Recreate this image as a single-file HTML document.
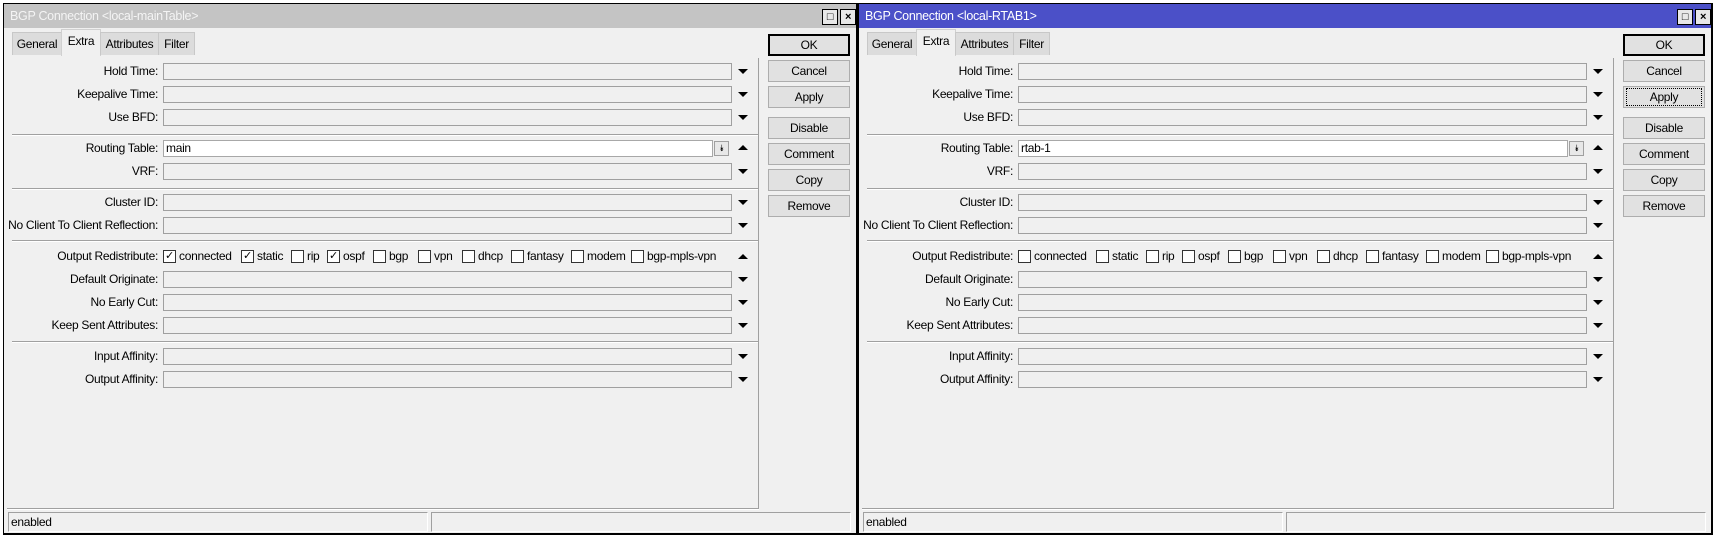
<!DOCTYPE html>
<html><head><meta charset="utf-8"><style>
*{box-sizing:border-box;margin:0;padding:0}
body{width:1716px;height:541px;background:#fff;position:relative;overflow:hidden;font-family:"Liberation Sans",sans-serif;font-size:12px;color:#000;letter-spacing:-0.3px}
.win{position:absolute;top:3px;width:855px;height:532px;border:1px solid #000;border-width:1px 2px 2px 1px;background:#f0f0f0}
.tb{position:absolute;left:0;top:0;right:0;height:24px;background:#c4c4c4;color:#f4f4f4;font-size:12.5px;line-height:24px;padding-left:6px}
.w2 .tb{background:#4b50c8;color:#fff}
.wb{position:absolute;top:5px;width:16px;height:16px;border:1px solid #000;background:#e8e8e8;font-size:11px;line-height:14px;text-align:center;font-weight:bold}
.tab{position:absolute;top:28px;height:23px;background:#dcdcdc;border:1px solid #c8c8c8;border-bottom:none;line-height:22px;text-align:center;font-size:12px}
.tab.sel{top:25px;height:27px;background:#f0f0f0;border-color:#d0d0d0;line-height:22px}
.lb{position:absolute;left:0;width:154px;text-align:right;height:17px;line-height:17px}
.f{position:absolute;left:159px;width:569px;height:17px;border:1px solid #a0a0a0;background:#f0f0f0;line-height:15px;padding-left:2px}
.f.w{background:#fff;width:550px;border-color:#a8a8a8}
.dn,.up{position:absolute;left:734px;width:0;height:0;border-left:5px solid transparent;border-right:5px solid transparent}
.dn{border-top:5px solid #000}
.up{border-bottom:5px solid #000}
.sep{position:absolute;left:8px;width:746px;height:2px;border-top:1px solid #a0a0a0;border-bottom:1px solid #fff}
.btn{position:absolute;left:764px;width:82px;height:22px;border:1px solid #adadad;background:#e1e1e1;text-align:center;line-height:20px}
.btn.ok{border:2px solid #000;line-height:18px}
.btn.foc span{outline:1px dotted #000;outline-offset:1px;padding:0 22px}
.cb{position:absolute;top:246px;width:13px;height:13px;border:1px solid #333;background:#fff;font-size:11px;line-height:11px;text-align:center}
.cl{position:absolute;top:246px;line-height:13px}
.dd{position:absolute;left:710px;width:15px;height:15px;border:1px solid #a0a0a0;background:#e8e8e8;font-size:9px;text-align:center;line-height:13px}
.pr{position:absolute;left:754px;top:54px;width:1px;height:451px;background:#a0a0a0}
.pb{position:absolute;left:3px;top:504px;width:752px;height:2px;background:#a0a0a0;border-bottom:1px solid #fff}
.st{position:absolute;top:508px;height:20px;border:1px solid #a0a0a0;border-right-color:#fff;border-bottom-color:#fff;line-height:18px;padding-left:2px}
</style></head><body>

<!-- Window 1 -->
<div class="win" style="left:3px">
 <div class="tb">BGP Connection &lt;local-mainTable&gt;</div>
 <div class="wb" style="left:818px">□</div><div class="wb" style="left:836px">×</div>
 <div class="tab" style="left:8px;width:50px">General</div>
 <div class="tab sel" style="left:57px;width:40px">Extra</div>
 <div class="tab" style="left:96px;width:59px">Attributes</div>
 <div class="tab" style="left:154px;width:37px">Filter</div>
 <div class="pr"></div><div class="pb"></div>

 <div class="lb" style="top:59px">Hold Time:</div><div class="f" style="top:59px"></div><div class="dn" style="top:65px"></div>
 <div class="lb" style="top:82px">Keepalive Time:</div><div class="f" style="top:82px"></div><div class="dn" style="top:88px"></div>
 <div class="lb" style="top:105px">Use BFD:</div><div class="f" style="top:105px"></div><div class="dn" style="top:111px"></div>
 <div class="sep" style="top:130px"></div>
 <div class="lb" style="top:136px">Routing Table:</div><div class="f w" style="top:136px">main</div><div class="dd" style="top:137px">⯯</div><div class="up" style="top:141px"></div>
 <div class="lb" style="top:159px">VRF:</div><div class="f" style="top:159px"></div><div class="dn" style="top:165px"></div>
 <div class="sep" style="top:184px"></div>
 <div class="lb" style="top:190px">Cluster ID:</div><div class="f" style="top:190px"></div><div class="dn" style="top:196px"></div>
 <div class="lb" style="top:213px">No Client To Client Reflection:</div><div class="f" style="top:213px"></div><div class="dn" style="top:219px"></div>
 <div class="sep" style="top:236px"></div>
 <div class="lb" style="top:244px">Output Redistribute:</div>
 <div class="cb" style="left:159px">✓</div><div class="cl" style="left:175px">connected</div>
 <div class="cb" style="left:237px">✓</div><div class="cl" style="left:253px">static</div>
 <div class="cb" style="left:287px"></div><div class="cl" style="left:303px">rip</div>
 <div class="cb" style="left:323px">✓</div><div class="cl" style="left:339px">ospf</div>
 <div class="cb" style="left:369px"></div><div class="cl" style="left:385px">bgp</div>
 <div class="cb" style="left:414px"></div><div class="cl" style="left:430px">vpn</div>
 <div class="cb" style="left:458px"></div><div class="cl" style="left:474px">dhcp</div>
 <div class="cb" style="left:507px"></div><div class="cl" style="left:523px">fantasy</div>
 <div class="cb" style="left:567px"></div><div class="cl" style="left:583px">modem</div>
 <div class="cb" style="left:627px"></div><div class="cl" style="left:643px">bgp-mpls-vpn</div>
 <div class="up" style="top:250px"></div>
 <div class="lb" style="top:267px">Default Originate:</div><div class="f" style="top:267px"></div><div class="dn" style="top:273px"></div>
 <div class="lb" style="top:290px">No Early Cut:</div><div class="f" style="top:290px"></div><div class="dn" style="top:296px"></div>
 <div class="lb" style="top:313px">Keep Sent Attributes:</div><div class="f" style="top:313px"></div><div class="dn" style="top:319px"></div>
 <div class="sep" style="top:337px"></div>
 <div class="lb" style="top:344px">Input Affinity:</div><div class="f" style="top:344px"></div><div class="dn" style="top:350px"></div>
 <div class="lb" style="top:367px">Output Affinity:</div><div class="f" style="top:367px"></div><div class="dn" style="top:373px"></div>

 <div class="btn ok" style="top:30px">OK</div>
 <div class="btn" style="top:56px">Cancel</div>
 <div class="btn" style="top:82px">Apply</div>
 <div class="btn" style="top:113px">Disable</div>
 <div class="btn" style="top:139px">Comment</div>
 <div class="btn" style="top:165px">Copy</div>
 <div class="btn" style="top:191px">Remove</div>

 <div class="st" style="left:4px;width:420px">enabled</div>
 <div class="st" style="left:427px;width:420px"></div>
</div>

<!-- Window 2 -->
<div class="win w2" style="left:858px">
 <div class="tb">BGP Connection &lt;local-RTAB1&gt;</div>
 <div class="wb" style="left:818px">□</div><div class="wb" style="left:836px">×</div>
 <div class="tab" style="left:8px;width:50px">General</div>
 <div class="tab sel" style="left:57px;width:40px">Extra</div>
 <div class="tab" style="left:96px;width:59px">Attributes</div>
 <div class="tab" style="left:154px;width:37px">Filter</div>
 <div class="pr"></div><div class="pb"></div>

 <div class="lb" style="top:59px">Hold Time:</div><div class="f" style="top:59px"></div><div class="dn" style="top:65px"></div>
 <div class="lb" style="top:82px">Keepalive Time:</div><div class="f" style="top:82px"></div><div class="dn" style="top:88px"></div>
 <div class="lb" style="top:105px">Use BFD:</div><div class="f" style="top:105px"></div><div class="dn" style="top:111px"></div>
 <div class="sep" style="top:130px"></div>
 <div class="lb" style="top:136px">Routing Table:</div><div class="f w" style="top:136px">rtab-1</div><div class="dd" style="top:137px">⯯</div><div class="up" style="top:141px"></div>
 <div class="lb" style="top:159px">VRF:</div><div class="f" style="top:159px"></div><div class="dn" style="top:165px"></div>
 <div class="sep" style="top:184px"></div>
 <div class="lb" style="top:190px">Cluster ID:</div><div class="f" style="top:190px"></div><div class="dn" style="top:196px"></div>
 <div class="lb" style="top:213px">No Client To Client Reflection:</div><div class="f" style="top:213px"></div><div class="dn" style="top:219px"></div>
 <div class="sep" style="top:236px"></div>
 <div class="lb" style="top:244px">Output Redistribute:</div>
 <div class="cb" style="left:159px"></div><div class="cl" style="left:175px">connected</div>
 <div class="cb" style="left:237px"></div><div class="cl" style="left:253px">static</div>
 <div class="cb" style="left:287px"></div><div class="cl" style="left:303px">rip</div>
 <div class="cb" style="left:323px"></div><div class="cl" style="left:339px">ospf</div>
 <div class="cb" style="left:369px"></div><div class="cl" style="left:385px">bgp</div>
 <div class="cb" style="left:414px"></div><div class="cl" style="left:430px">vpn</div>
 <div class="cb" style="left:458px"></div><div class="cl" style="left:474px">dhcp</div>
 <div class="cb" style="left:507px"></div><div class="cl" style="left:523px">fantasy</div>
 <div class="cb" style="left:567px"></div><div class="cl" style="left:583px">modem</div>
 <div class="cb" style="left:627px"></div><div class="cl" style="left:643px">bgp-mpls-vpn</div>
 <div class="up" style="top:250px"></div>
 <div class="lb" style="top:267px">Default Originate:</div><div class="f" style="top:267px"></div><div class="dn" style="top:273px"></div>
 <div class="lb" style="top:290px">No Early Cut:</div><div class="f" style="top:290px"></div><div class="dn" style="top:296px"></div>
 <div class="lb" style="top:313px">Keep Sent Attributes:</div><div class="f" style="top:313px"></div><div class="dn" style="top:319px"></div>
 <div class="sep" style="top:337px"></div>
 <div class="lb" style="top:344px">Input Affinity:</div><div class="f" style="top:344px"></div><div class="dn" style="top:350px"></div>
 <div class="lb" style="top:367px">Output Affinity:</div><div class="f" style="top:367px"></div><div class="dn" style="top:373px"></div>

 <div class="btn ok" style="top:30px">OK</div>
 <div class="btn" style="top:56px">Cancel</div>
 <div class="btn foc" style="top:82px"><span>Apply</span></div>
 <div class="btn" style="top:113px">Disable</div>
 <div class="btn" style="top:139px">Comment</div>
 <div class="btn" style="top:165px">Copy</div>
 <div class="btn" style="top:191px">Remove</div>

 <div class="st" style="left:4px;width:420px">enabled</div>
 <div class="st" style="left:427px;width:420px"></div>
</div>
</body></html>
